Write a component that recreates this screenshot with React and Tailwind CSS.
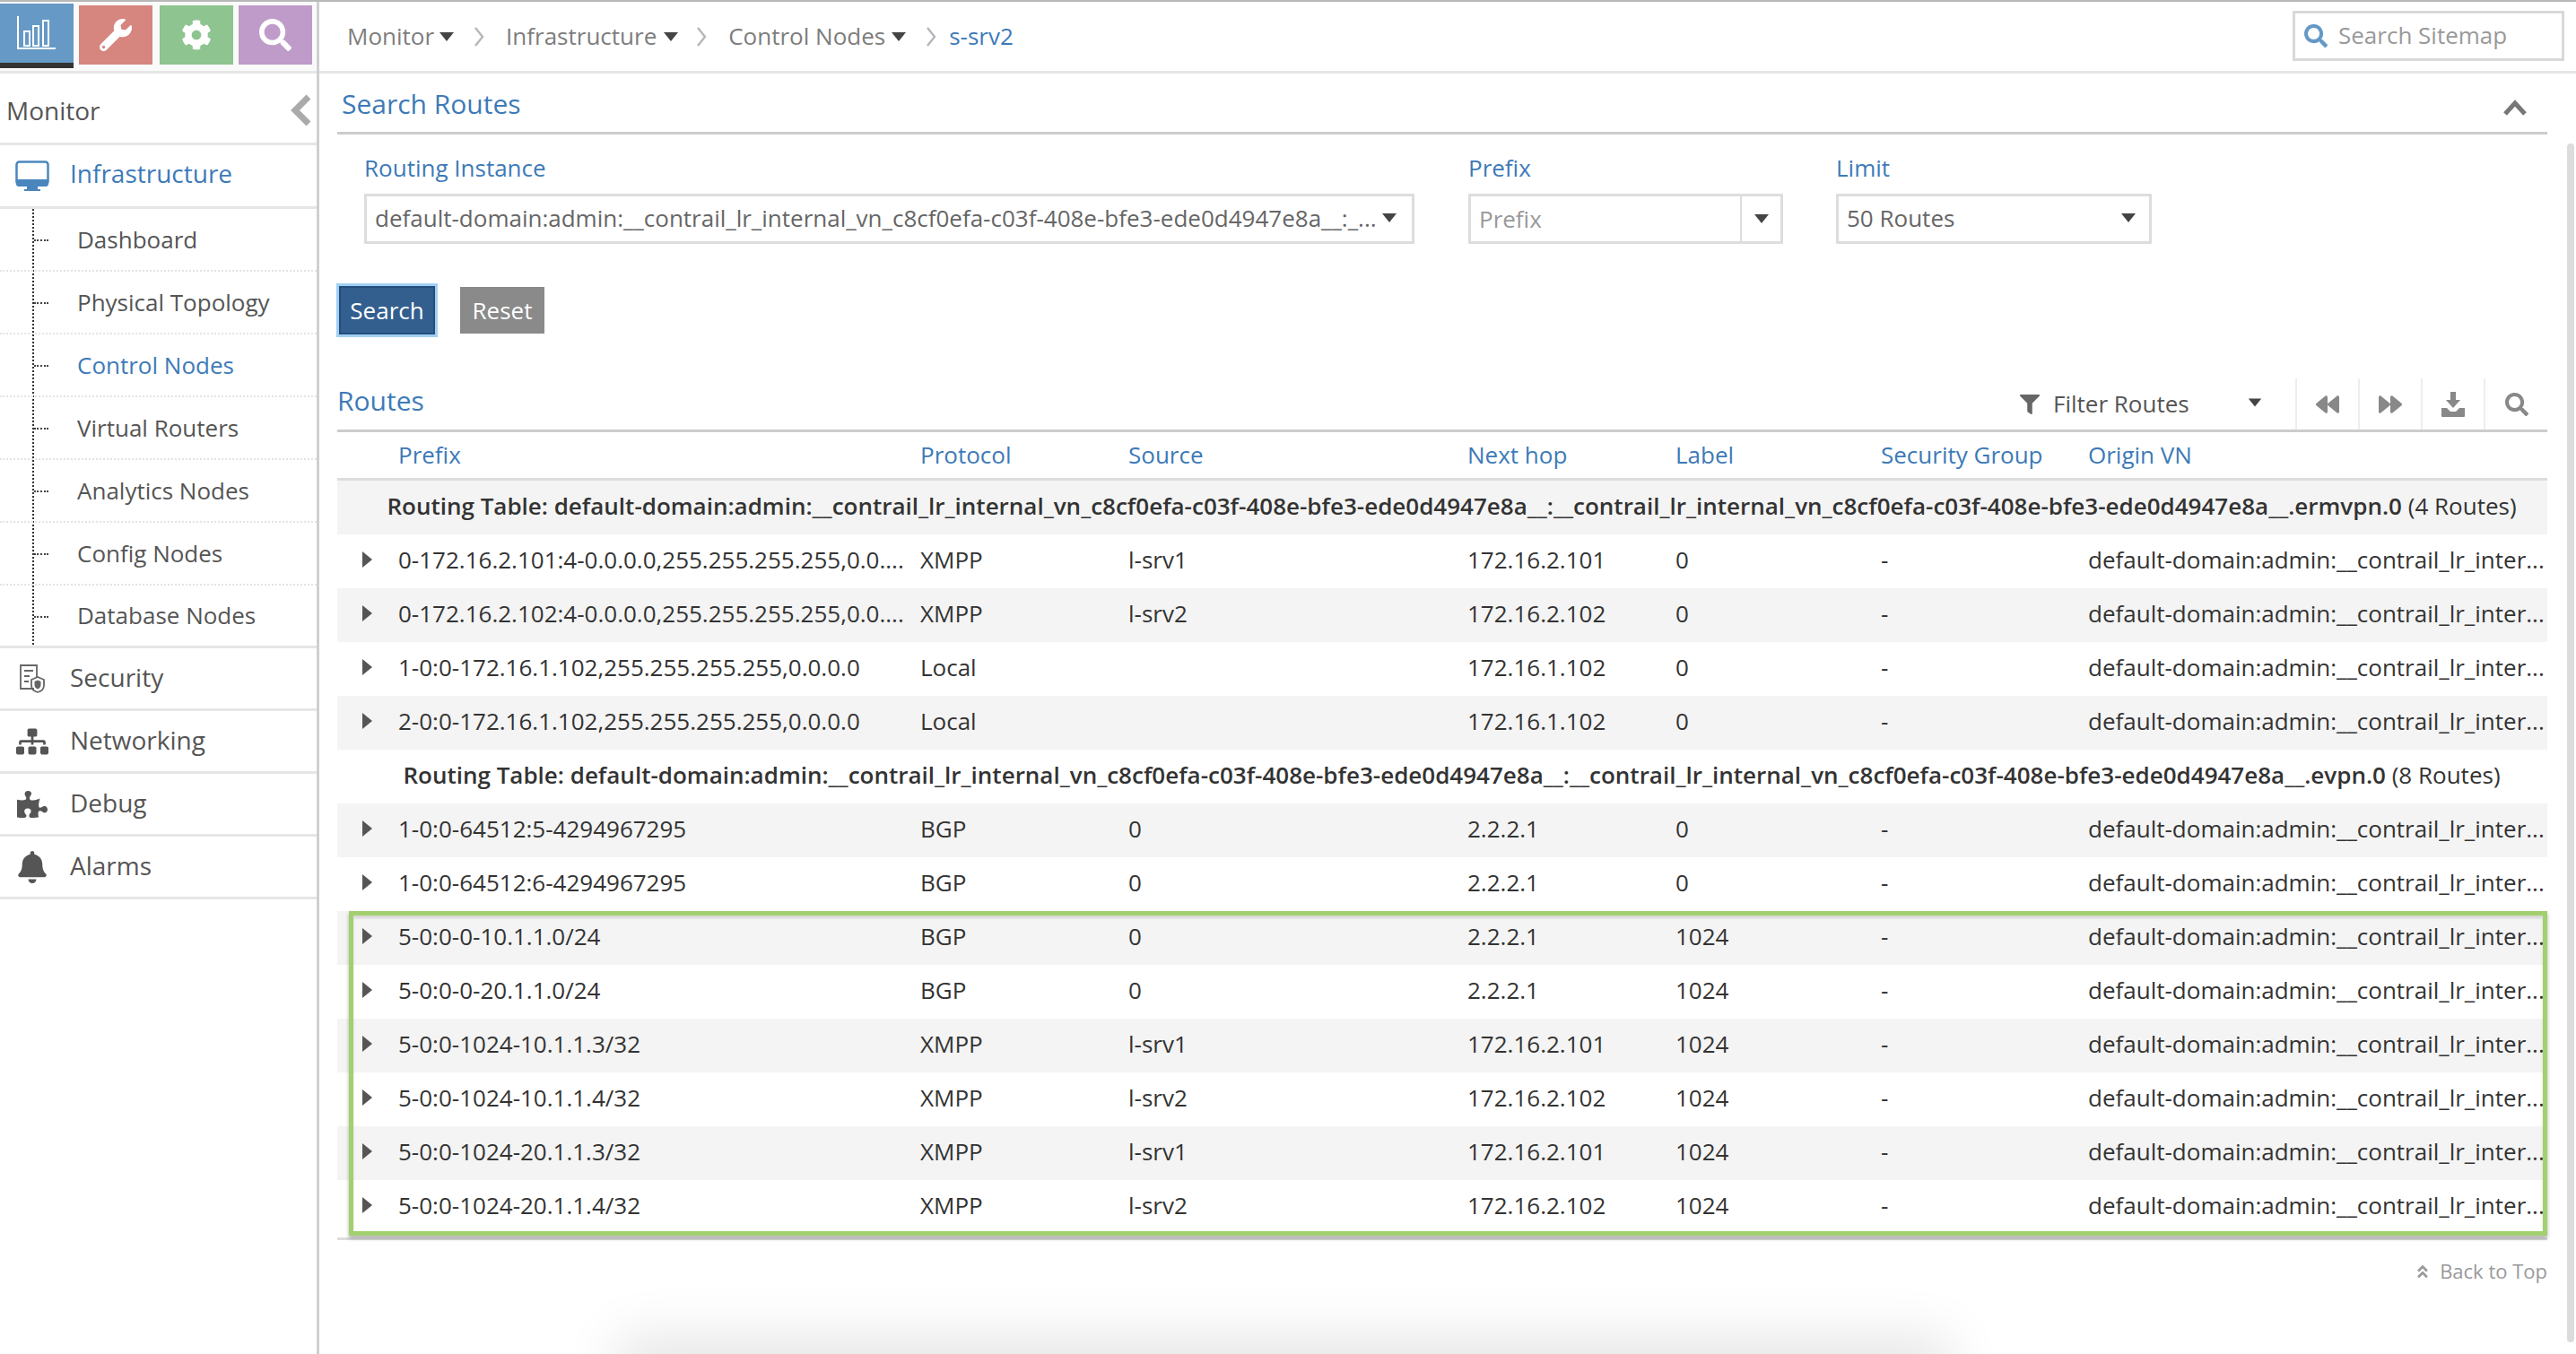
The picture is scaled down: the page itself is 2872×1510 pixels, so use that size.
import { FaWrench, FaCog, FaSearch, FaSitemap, FaPuzzlePiece, FaBell, FaFilter, FaBackward, FaForward, FaAngleDoubleUp } from 'react-icons/fa';

const subItems = ['Dashboard', 'Physical Topology', 'Control Nodes', 'Virtual Routers', 'Analytics Nodes', 'Config Nodes', 'Database Nodes'];

const origin = 'default-domain:admin:__contrail_lr_inter...';
const tableName = 'default-domain:admin:__contrail_lr_internal_vn_c8cf0efa-c03f-408e-bfe3-ede0d4947e8a__:__contrail_lr_internal_vn_c8cf0efa-c03f-408e-bfe3-ede0d4947e8a__';

const firstRows = [
    ['0-172.16.2.101:4-0.0.0.0,255.255.255.255,0.0....', 'XMPP', 'l-srv1', '172.16.2.101', '0'],
    ['0-172.16.2.102:4-0.0.0.0,255.255.255.255,0.0....', 'XMPP', 'l-srv2', '172.16.2.102', '0'],
    ['1-0:0-172.16.1.102,255.255.255.255,0.0.0.0', 'Local', '', '172.16.1.102', '0'],
    ['2-0:0-172.16.1.102,255.255.255.255,0.0.0.0', 'Local', '', '172.16.1.102', '0'],
];
const secondRows = [
    ['1-0:0-64512:5-4294967295', 'BGP', '0', '2.2.2.1', '0'],
    ['1-0:0-64512:6-4294967295', 'BGP', '0', '2.2.2.1', '0'],
];
const markedRows = [
    ['5-0:0-0-10.1.1.0/24', 'BGP', '0', '2.2.2.1', '1024'],
    ['5-0:0-0-20.1.1.0/24', 'BGP', '0', '2.2.2.1', '1024'],
    ['5-0:0-1024-10.1.1.3/32', 'XMPP', 'l-srv1', '172.16.2.101', '1024'],
    ['5-0:0-1024-10.1.1.4/32', 'XMPP', 'l-srv2', '172.16.2.102', '1024'],
    ['5-0:0-1024-20.1.1.3/32', 'XMPP', 'l-srv1', '172.16.2.101', '1024'],
    ['5-0:0-1024-20.1.1.4/32', 'XMPP', 'l-srv2', '172.16.2.102', '1024'],
];

const gridCols = 'grid grid-cols-[68px_582px_232px_378px_232px_229px_231px_512px]';

function Caret({ className = '' }) {
    return <span className={`inline-block w-0 h-0 border-x-[8px] border-x-transparent border-t-[10px] border-t-[#444] ${className}`} />;
}

function Chevron({ className = '' }) {
    return (
        <svg viewBox="0 0 12 24" className={`w-[12px] h-[24px] ${className}`} fill="none" stroke="#b4b6bc" strokeWidth="2.4">
            <path d="M2 2l8 10-8 10" />
        </svg>
    );
}

function Row({ cells, shaded }) {
    return (
        <div className={`${gridCols} h-[60px] pb-[3px] items-center ${shaded ? 'bg-[#f4f4f4]' : 'bg-white'}`}>
            <div className="pl-[28px]">
                <span className="block -mt-[2px] w-0 h-0 border-y-[9px] border-y-transparent border-l-[11px] border-l-[#555]" />
            </div>
            {cells.map((c, i) => <div key={i} className="whitespace-nowrap">{c}</div>)}
            <div>-</div>
            <div className="whitespace-nowrap">{origin}</div>
        </div>
    );
}

function GroupRow({ name, count, shaded }) {
    return (
        <div className={`h-[60px] pb-[3px] flex items-center justify-center pl-[21px] whitespace-nowrap ${shaded ? 'bg-[#f4f4f4]' : 'bg-white'}`}>
            <span className="font-semibold">Routing Table: {name}</span>
            <span>&nbsp;{count}</span>
        </div>
    );
}

function SideRow({ icon, label }) {
    return (
        <div className="h-[70px] border-b-[3px] border-[#e6e6e6] flex items-center text-[#555] text-[28px]">
            <div className="w-[78px] flex justify-center pr-[6px]">{icon}</div>
            <span className="mb-[3px]">{label}</span>
        </div>
    );
}

export default function App() {
    return (
        <div className="relative w-[2872px] h-[1510px] overflow-hidden bg-white text-[#333] text-[26px] font-['Open_Sans',sans-serif]">
            <div className="h-[2px] bg-[#b8b8b8]" />
            <div className="flex h-[1508px]">
                {/* Sidebar */}
                <aside className="w-[356px] shrink-0 border-r-[3px] border-[#cfcfcf]">
                    <div className="h-[80px] bg-[#fafafa] border-b-[3px] border-[#e6e6e6] pt-[2px]">
                        <div className="flex items-start">
                            <div className="w-[82px] h-[72px] bg-[#6699c5] border-b-[6px] border-[#333] flex items-center justify-center">
                                <svg viewBox="0 0 44 40" className="w-[44px] h-[40px]" fill="none" stroke="white" strokeWidth="2">
                                    <path d="M1 1v36h42" />
                                    <path d="M8 18h6v16H8zM18 12h6v22h-6zM29 6h6v28h-6z" />
                                </svg>
                            </div>
                            <div className="ml-[6px] mt-[2px] w-[82px] h-[66px] bg-[#d6867f] flex items-center justify-center text-white"><FaWrench size={36} /></div>
                            <div className="ml-[8px] mt-[2px] w-[82px] h-[66px] bg-[#8dc48f] flex items-center justify-center text-white"><FaCog size={34} /></div>
                            <div className="ml-[6px] mt-[2px] w-[82px] h-[66px] bg-[#bf9bc9] flex items-center justify-center text-white"><FaSearch size={36} /></div>
                        </div>
                    </div>
                    <div className="h-[80px] pt-[4px] border-b-[3px] border-[#e6e6e6] flex items-center justify-between pl-[7px] pr-[6px] text-[#555] text-[28px]">
                        <span>Monitor</span>
                        <svg viewBox="0 0 24 36" className="w-[24px] h-[36px]" fill="none" stroke="#aaaaaa" strokeWidth="7">
                            <path d="M21 3L6 18l15 15" />
                        </svg>
                    </div>
                    <div className="h-[71px] border-b-[3px] border-[#e6e6e6] flex items-center text-[#3d7ab8] text-[28px]">
                        <div className="w-[78px] flex justify-center pr-[6px]">
                            <svg viewBox="0 0 38 34" className="w-[38px] h-[34px]">
                                <rect x="1.5" y="1.5" width="35" height="25" rx="3" fill="white" stroke="#4a86bd" strokeWidth="2.5" />
                                <path d="M1 21h36v5a3 3 0 0 1-3 3H4a3 3 0 0 1-3-3z M13 29h12v3h3v2H10v-2h3z" fill="#4a86bd" />
                            </svg>
                        </div>
                        <span className="mb-[7px]">Infrastructure</span>
                    </div>
                    <div className="relative">
                        <div className="absolute left-[36px] top-0 bottom-0 border-l-2 border-dotted border-[#333]" />
                        {subItems.map((item, i) => (
                            <div key={item} className={`relative h-[70px] flex items-center pl-[86px] ${item === 'Control Nodes' ? 'text-[#3d7ab8]' : 'text-[#555]'} ${i < subItems.length - 1 ? 'border-b-2 border-dotted border-[#e4e4e4]' : 'border-b-[3px] border-[#e6e6e6]'}`}>
                                <div className="absolute left-[38px] top-1/2 w-[16px] border-t-2 border-dotted border-[#444]" />
                                {item}
                            </div>
                        ))}
                    </div>
                    <SideRow label="Security" icon={
                        <svg viewBox="0 0 28 32" className="w-[28px] h-[32px]" fill="none" stroke="#666" strokeWidth="1.8">
                            <path d="M16 27H1V1h18v13" />
                            <path d="M5 7h10M5 13h6M5 19h5" />
                            <path d="M13 17l7-3 7 3v6c0 4-3 7-7 8-4-1-7-4-7-8z" />
                            <path d="M16.500 19l3.500-1.500 3.500 1.500v4c0 2-1.500 3.500-3.500 4.500-2-1-3.500-2.500-3.500-4.500z" fill="#666" stroke="none" />
                        </svg>
                    } />
                    <SideRow label="Networking" icon={<FaSitemap size={36} color="#555" />} />
                    <SideRow label="Debug" icon={<FaPuzzlePiece size={34} color="#555" />} />
                    <SideRow label="Alarms" icon={<FaBell size={36} color="#555" />} />
                </aside>

                {/* Main */}
                <main className="flex-1 min-w-0">
                    <div className="h-[80px] border-b-[3px] border-[#e6e6e6] flex items-center justify-between pl-[31px] pr-[13px] text-[#7d7d7d]">
                        <div className="flex items-center">
                            <span>Monitor</span>
                            <Caret className="ml-[6px]" />
                            <Chevron className="ml-[22px]" />
                            <span className="ml-[24px]">Infrastructure</span>
                            <Caret className="ml-[8px]" />
                            <Chevron className="ml-[20px]" />
                            <span className="ml-[24px]">Control Nodes</span>
                            <Caret className="ml-[7px]" />
                            <Chevron className="ml-[22px]" />
                            <span className="ml-[14px] text-[#3d7ab8]">s-srv2</span>
                        </div>
                        <div className="w-[303px] h-[56px] mb-[2px] border-[3px] border-[#d9d9d9] flex items-center pl-[10px] text-[#999]">
                            <FaSearch size={26} color="#6699c5" />
                            <span className="ml-[12px]">Search Sitemap</span>
                        </div>
                    </div>

                    <div className="pl-[20px] pr-[32px]">
                        <div className="h-[68px] pt-[2px] border-b-[3px] border-[#ccc] flex items-center justify-between">
                            <span className="ml-[5px] text-[30px] text-[#3d7ab8]">Search Routes</span>
                            <svg viewBox="0 0 26 18" className="w-[26px] h-[18px] mr-[23px] mt-[8px]" fill="none" stroke="#777" strokeWidth="5">
                                <path d="M2 16L13 4l11 12" />
                            </svg>
                        </div>

                        <div className="flex gap-[60px] pl-[30px] pt-[16px]">
                            <div className="w-[1171px]">
                                <div className="h-[50px] pt-[2px] text-[#3d7ab8]">Routing Instance</div>
                                <div className="h-[56px] pb-[2px] border-[3px] border-[#ddd] flex items-center pl-[9px] text-[#666] whitespace-nowrap">
                                    default-domain:admin:__contrail_lr_internal_vn_c8cf0efa-c03f-408e-bfe3-ede0d4947e8a__:_...
                                    <Caret className="ml-[6px]" />
                                </div>
                            </div>
                            <div className="w-[351px]">
                                <div className="h-[50px] pt-[2px] text-[#3d7ab8]">Prefix</div>
                                <div className="h-[56px] border-[3px] border-[#ddd] flex items-center">
                                    <span className="flex-1 pl-[9px] text-[#999]">Prefix</span>
                                    <span className="w-[45px] h-full border-l-2 border-[#ddd] flex items-center justify-center"><Caret /></span>
                                </div>
                            </div>
                            <div className="w-[352px] -ml-[1px]">
                                <div className="h-[50px] pt-[2px] text-[#3d7ab8]">Limit</div>
                                <div className="h-[56px] pb-[2px] border-[3px] border-[#ddd] flex items-center justify-between pl-[9px] pr-[15px] text-[#666]">
                                    <span>50 Routes</span>
                                    <Caret />
                                </div>
                            </div>
                        </div>

                        <div className="flex items-center mt-[47px] gap-[28px]">
                            <button className="w-[107px] h-[54px] bg-[#335f8f] border-2 border-[#234f7f] text-white ml-[2px] shadow-[0_0_0_3px_rgba(102,175,233,0.6)]">Search</button>
                            <button className="w-[94px] h-[52px] bg-[#8a8a8a] text-white">Reset</button>
                        </div>

                        <div className="mt-[49px] h-[60px] border-b-[3px] border-[#ccc] flex justify-between">
                            <span className="text-[#3d7ab8] text-[30px] pt-[2px]">Routes</span>
                            <div className="flex items-stretch h-[57px] text-[#555]">
                                <div className="flex items-center w-[320px] relative">
                                    <FaFilter size={22} color="#666" className="absolute left-[13px]" />
                                    <span className="absolute left-[50px]">Filter Routes</span>
                                    <Caret className="absolute right-[37px] top-[22px] scale-90" />
                                </div>
                                <div className="w-[70px] border-l-2 border-[#eee] flex items-center justify-center"><FaBackward size={26} color="#888" /></div>
                                <div className="w-[70px] border-l-2 border-[#eee] flex items-center justify-center"><FaForward size={26} color="#888" /></div>
                                <div className="w-[70px] border-l-2 border-[#eee] flex items-center justify-center">
                                    <svg viewBox="0 0 28 28" className="w-[28px] h-[28px]" fill="#888">
                                        <path d="M11 0h6v9h5l-8 9-8-9h5z" />
                                        <path d="M1 18h6l4 4h6l4-4h6v9a1 1 0 0 1-1 1H2a1 1 0 0 1-1-1z" />
                                    </svg>
                                </div>
                                <div className="w-[71px] border-l-2 border-[#eee] flex items-center justify-center"><FaSearch size={26} color="#888" /></div>
                            </div>
                        </div>

                        <div className={`${gridCols} h-[54px] items-center border-b-[3px] border-[#ddd] text-[#3d7ab8]`}>
                            <div />
                            <div>Prefix</div>
                            <div>Protocol</div>
                            <div>Source</div>
                            <div>Next hop</div>
                            <div>Label</div>
                            <div>Security Group</div>
                            <div>Origin VN</div>
                        </div>

                        <GroupRow name={`${tableName}.ermvpn.0`} count="(4 Routes)" shaded />
                        {firstRows.map((r, i) => <Row key={r[0]} cells={r} shaded={i % 2 === 1} />)}
                        <GroupRow name={`${tableName}.evpn.0`} count="(8 Routes)" />
                        {secondRows.map((r, i) => <Row key={r[0]} cells={r} shaded={i % 2 === 0} />)}

                        <div className="relative border-b-[3px] border-[#ddd] pb-[4px]">
                            {markedRows.map((r, i) => <Row key={r[0]} cells={r} shaded={i % 2 === 0} />)}
                            <div className="absolute left-[13px] right-0 top-0 bottom-[2px] border-[5px] border-[#a3d06f] shadow-[0_3px_4px_rgba(0,0,0,0.3),inset_0_3px_3px_rgba(0,0,0,0.12)] pointer-events-none" />
                        </div>

                        <div className="flex justify-end items-center mt-[18px] text-[22px] text-[#999]">
                            <FaAngleDoubleUp size={18} className="mr-[10px]" />
                            Back to Top
                        </div>
                    </div>
                </main>
            </div>

            {/* Scrollbar */}
            <div className="absolute left-[2862px] top-[160px] w-[8px] h-[1337px] rounded-full bg-[#dcdcdc]" />
            {/* Shadow of a panel below the fold */}
            <div className="absolute left-[708px] top-[1510px] w-[1446px] h-[40px] shadow-[0_0_60px_20px_rgba(0,0,0,0.1)]" />
        </div>
    );
}
